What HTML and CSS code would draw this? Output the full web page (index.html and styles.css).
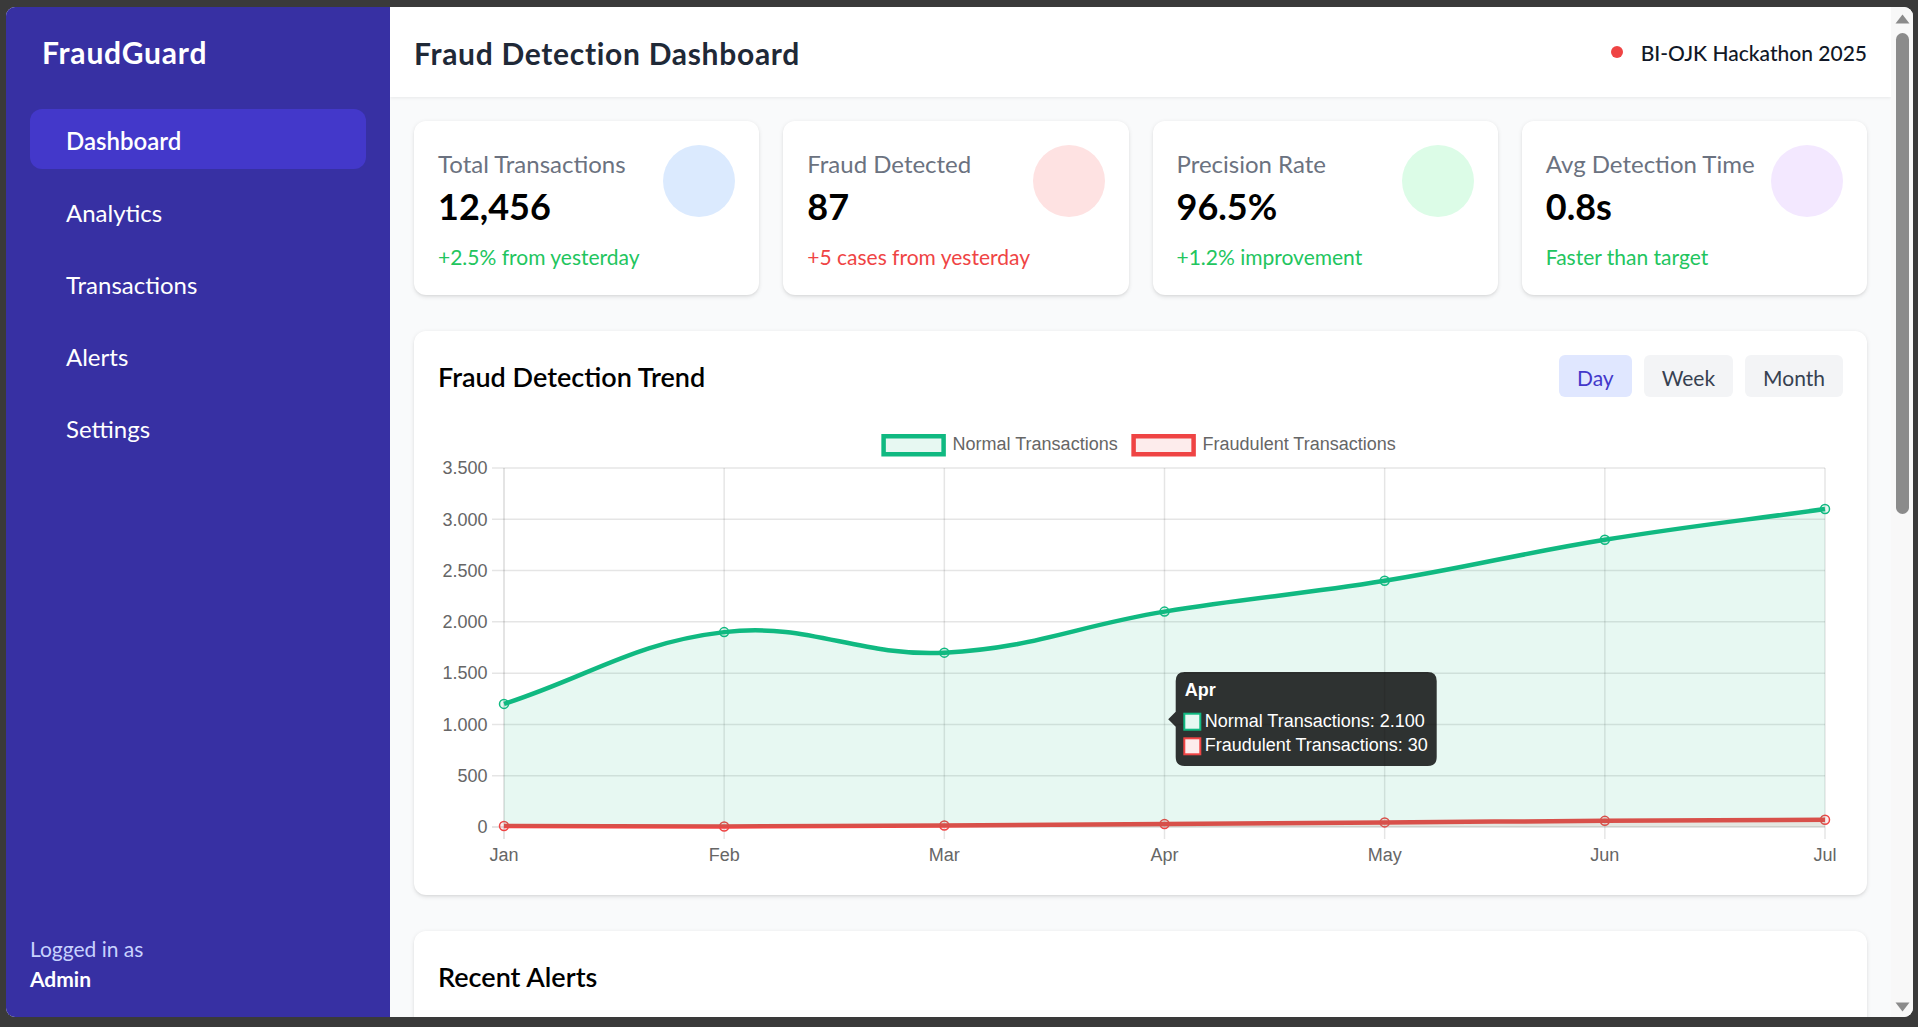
FILE: index.html
```
<!DOCTYPE html>
<html lang="en">
<head>
<meta charset="utf-8">
<title>FraudGuard - Fraud Detection Dashboard</title>
<link rel="stylesheet" href="styles.css">
</head>
<body>
<div class="window">
  <aside class="sidebar">
    <div class="logo">FraudGuard</div>
    <nav class="nav">
      <a class="nav-item active" href="#">Dashboard</a>
      <a class="nav-item" href="#">Analytics</a>
      <a class="nav-item" href="#">Transactions</a>
      <a class="nav-item" href="#">Alerts</a>
      <a class="nav-item" href="#">Settings</a>
    </nav>
    <div class="user">
      <div class="user-label">Logged in as</div>
      <div class="user-name">Admin</div>
    </div>
  </aside>

  <main class="main">
    <header class="topbar">
      <h1 class="page-title">Fraud Detection Dashboard</h1>
      <div class="event"><span class="event-dot"></span><span class="event-name">BI-OJK Hackathon 2025</span></div>
    </header>

    <div class="content">
      <section class="stats">
        <div class="card stat">
          <div class="stat-row">
            <div><div class="stat-label">Total Transactions</div><div class="stat-value">12,456</div></div>
            <div class="stat-icon icon-blue"></div>
          </div>
          <div class="stat-note up">+2.5% from yesterday</div>
        </div>
        <div class="card stat">
          <div class="stat-row">
            <div><div class="stat-label">Fraud Detected</div><div class="stat-value">87</div></div>
            <div class="stat-icon icon-red"></div>
          </div>
          <div class="stat-note down">+5 cases from yesterday</div>
        </div>
        <div class="card stat">
          <div class="stat-row">
            <div><div class="stat-label">Precision Rate</div><div class="stat-value">96.5%</div></div>
            <div class="stat-icon icon-green"></div>
          </div>
          <div class="stat-note up">+1.2% improvement</div>
        </div>
        <div class="card stat">
          <div class="stat-row">
            <div><div class="stat-label">Avg Detection Time</div><div class="stat-value">0.8s</div></div>
            <div class="stat-icon icon-purple"></div>
          </div>
          <div class="stat-note up">Faster than target</div>
        </div>
      </section>

      <section class="card chart-card">
        <div class="chart-head">
          <h2 class="card-title">Fraud Detection Trend</h2>
          <div class="range">
            <button class="range-btn active">Day</button>
            <button class="range-btn">Week</button>
            <button class="range-btn">Month</button>
          </div>
        </div>
        <svg class="chart" viewBox="0 0 1405 450" width="1405" height="450">
          <!-- legend -->
          <rect x="445.6" y="15.25" width="60" height="18" fill="rgba(16,185,129,0.1)" stroke="#10b981" stroke-width="4.5"/>
          <text class="legend-text" x="514.6" y="29">Normal Transactions</text>
          <rect x="695.6" y="15.25" width="60" height="18" fill="rgba(239,68,68,0.1)" stroke="#ef4444" stroke-width="4.5"/>
          <text class="legend-text" x="764.6" y="29">Fraudulent Transactions</text>

          <!-- grid -->
          <g class="grid">
            <line x1="54" y1="354.71" x2="1387" y2="354.71"/>
            <line x1="54" y1="303.43" x2="1387" y2="303.43"/>
            <line x1="54" y1="252.14" x2="1387" y2="252.14"/>
            <line x1="54" y1="200.86" x2="1387" y2="200.86"/>
            <line x1="54" y1="149.57" x2="1387" y2="149.57"/>
            <line x1="54" y1="98.29" x2="1387" y2="98.29"/>
            <line x1="54" y1="47" x2="1387" y2="47"/>
            <line x1="286.17" y1="47" x2="286.17" y2="418"/>
            <line x1="506.33" y1="47" x2="506.33" y2="418"/>
            <line x1="726.5" y1="47" x2="726.5" y2="418"/>
            <line x1="946.67" y1="47" x2="946.67" y2="418"/>
            <line x1="1166.83" y1="47" x2="1166.83" y2="418"/>
            <line x1="1387" y1="47" x2="1387" y2="418"/>
          </g>
          <g class="axis-line">
            <line x1="54" y1="406" x2="1387" y2="406"/>
            <line x1="66" y1="47" x2="66" y2="418"/>
          </g>

          <!-- y labels -->
          <g class="tick-y">
            <text x="49.5" y="412.3">0</text>
            <text x="49.5" y="361">500</text>
            <text x="49.5" y="309.7">1.000</text>
            <text x="49.5" y="258.4">1.500</text>
            <text x="49.5" y="207.2">2.000</text>
            <text x="49.5" y="155.9">2.500</text>
            <text x="49.5" y="104.6">3.000</text>
            <text x="49.5" y="53.3">3.500</text>
          </g>
          <!-- x labels -->
          <g class="tick-x">
            <text x="66" y="440">Jan</text>
            <text x="286.17" y="440">Feb</text>
            <text x="506.33" y="440">Mar</text>
            <text x="726.5" y="440">Apr</text>
            <text x="946.67" y="440">May</text>
            <text x="1166.83" y="440">Jun</text>
            <text x="1387" y="440">Jul</text>
          </g>

          <path class="area-fraud" d="M66,404.97 L286.17,405.49 L506.33,404.46 L726.5,402.92 L946.67,401.38 L1166.83,399.85 L1387,398.82 L1387,406 L66,406 Z"/>
          <path class="line-fraud" d="M66,404.97 C154.07,405.18 196.08,405.6 286.17,405.49 C372.2,405.38 418.8,404.9 506.33,404.46 C594.9,404 638.1,403.5 726.5,402.92 C814.3,402.3 858.9,401.98 946.67,401.38 C1035,400.77 1078.5,400.4 1166.83,399.85 C1254.6,399.3 1298.9,399.2 1387,398.82"/>
          <g class="pts-fraud">
            <circle cx="66" cy="404.97" r="4.5"/>
            <circle cx="286.17" cy="405.49" r="4.5"/>
            <circle cx="506.33" cy="404.46" r="4.5"/>
            <circle cx="726.5" cy="402.92" r="4.5"/>
            <circle cx="946.67" cy="401.38" r="4.5"/>
            <circle cx="1166.83" cy="399.85" r="4.5"/>
            <circle cx="1387" cy="398.82" r="4.5"/>
          </g>

          <!-- normal dataset: area over the fraud line -->
          <path class="area-normal" d="M66,282.91 C154.07,254.19 196.08,221.6 286.17,211.11 C372.21,201.09 418.83,235.71 506.33,231.63 C594.97,227.5 638.12,205.01 726.5,190.6 C814.26,176.29 858.91,174.14 946.67,159.83 C1035.04,145.42 1078.46,133.21 1166.83,118.8 C1254.59,104.49 1298.93,100.34 1387,88.03 L1387,406 L66,406 Z"/>
          <path class="line-normal" d="M66,282.91 C154.07,254.19 196.08,221.6 286.17,211.11 C372.21,201.09 418.83,235.71 506.33,231.63 C594.97,227.5 638.12,205.01 726.5,190.6 C814.26,176.29 858.91,174.14 946.67,159.83 C1035.04,145.42 1078.46,133.21 1166.83,118.8 C1254.59,104.49 1298.93,100.34 1387,88.03"/>
          <g class="pts-normal">
            <circle cx="66" cy="282.91" r="4.5"/>
            <circle cx="286.17" cy="211.11" r="4.5"/>
            <circle cx="506.33" cy="231.63" r="4.5"/>
            <circle cx="726.5" cy="190.6" r="4.5"/>
            <circle cx="946.67" cy="159.83" r="4.5"/>
            <circle cx="1166.83" cy="118.8" r="4.5"/>
            <circle cx="1387" cy="88.03" r="4.5"/>
          </g>

          <!-- tooltip -->
          <g class="tooltip">
            <path class="tip-bg" d="M746.7,251 H989.7 Q998.7,251 998.7,260 V336 Q998.7,345 989.7,345 H746.7 Q737.7,345 737.7,336 V305.8 L730.2,298.3 L737.7,290.8 V260 Q737.7,251 746.7,251 Z"/>
            <text class="tip-title" x="746.7" y="274.7">Apr</text>
            <rect x="746.3" y="292.7" width="16" height="16" fill="#e7f8f2" stroke="#10b981" stroke-width="2"/>
            <text class="tip-body" x="766.7" y="305.7">Normal Transactions: 2.100</text>
            <rect x="746.3" y="317.3" width="16" height="16" fill="#fdecec" stroke="#ef4444" stroke-width="2"/>
            <text class="tip-body" x="766.7" y="329.7">Fraudulent Transactions: 30</text>
          </g>
        </svg>
      </section>

      <section class="card alerts-card">
        <h2 class="card-title">Recent Alerts</h2>
      </section>
    </div>
  </main>

  <div class="scrollbar">
    <svg class="sb-arrow sb-up" viewBox="0 0 15 10" width="15" height="10"><path d="M7.5,0.5 L14.5,9.5 L0.5,9.5 Z"/></svg>
    <div class="sb-thumb"></div>
    <div class="sb-space"></div>
    <svg class="sb-arrow sb-down" viewBox="0 0 15 10" width="15" height="10"><path d="M0.5,0.5 L14.5,0.5 L7.5,9.5 Z"/></svg>
  </div>
</div>
</body>
</html>
```
FILE: styles.css
```
* { box-sizing: border-box; }
html, body { margin: 0; }
body {
  height: 1027px;
  padding: 7px 5px 10px 6px;
  background: #3a3a3a;
  font-family: "Lato", "Noto Sans", sans-serif;
  overflow: hidden;
}
.window {
  display: flex;
  height: 100%;
  border-radius: 9px;
  overflow: hidden;
  background: #f9fafb;
}

/* sidebar */
.sidebar {
  flex: none;
  width: 384px;
  background: #3730a3;
  color: #fff;
  padding: 24px;
  display: flex;
  flex-direction: column;
}
.logo {
  font-size: 30px;
  line-height: 41px;
  padding: 1px 12px 0;
  font-weight: 700;
  letter-spacing: 0.8px;
  margin-bottom: 36px;
}
.nav { display: flex; flex-direction: column; gap: 12px; }
.nav-item {
  display: block;
  padding: 14px 36px 10px;
  font-size: 24px;
  line-height: 36px;
  color: #fff;
  text-decoration: none;
  border-radius: 12px;
}
.nav-item.active { background: #4338ca; font-weight: 600; }
.user { margin-top: auto; font-size: 21px; }
.user-label { color: #c7d2fe; line-height: 28px; padding-top: 2px; }
.user-name { font-weight: 700; line-height: 28px; padding-top: 2px; }

/* main */
.main {
  flex: 1;
  min-width: 0;
  display: flex;
  flex-direction: column;
  overflow: hidden;
  background: #f9fafb;
}
.topbar {
  flex: none;
  display: flex;
  align-items: center;
  justify-content: space-between;
  padding: 24px;
  background: #fff;
  box-shadow: 0 1.5px 3px rgba(0, 0, 0, 0.06);
  position: relative;
  z-index: 1;
}
.page-title {
  margin: 0;
  font-size: 30px;
  line-height: 40px;
  padding-top: 2px;
  font-weight: 700;
  color: #1f2937;
  letter-spacing: 0.7px;
}
.event { display: flex; align-items: center; }
.event-dot {
  width: 12px;
  height: 12px;
  border-radius: 50%;
  background: #ef4444;
  margin-right: 18px;
}
.event-name { font-size: 21px; line-height: 28px; padding-top: 2px; font-weight: 500; color: #111827; }

.content { flex: none; padding: 24px; }
.stats {
  display: grid;
  grid-template-columns: repeat(4, 1fr);
  gap: 24px;
  margin-bottom: 36px;
}
.card {
  background: #fff;
  border-radius: 12px;
  padding: 24px;
  box-shadow: 0 1.5px 4.5px rgba(0, 0, 0, 0.1), 0 1.5px 3px -1.5px rgba(0, 0, 0, 0.1);
}
.stat-row { display: flex; justify-content: space-between; align-items: flex-start; }
.stat-label { font-size: 24px; line-height: 34px; padding-top: 2px; color: #6b7280; }
.stat-value { font-size: 36px; line-height: 46px; padding-top: 2px; font-weight: 700; color: #000; }
.stat-icon { flex: none; width: 72px; height: 72px; border-radius: 50%; }
.icon-blue { background: #dbeafe; }
.icon-red { background: #fee2e2; }
.icon-green { background: #dcfce7; }
.icon-purple { background: #f3e8ff; }
.stat-note { margin-top: 12px; font-size: 21px; line-height: 28px; padding-top: 2px; }
.up { color: #22c55e; }
.down { color: #ef4444; }

.chart-card { margin-bottom: 36px; }
.chart-head {
  display: flex;
  align-items: center;
  justify-content: space-between;
  margin-bottom: 24px;
}
.card-title { margin: 0; font-size: 27px; line-height: 40px; padding-top: 2px; font-weight: 600; color: #000; }
.range { display: flex; gap: 12px; }
.range-btn {
  font-family: inherit;
  font-size: 21px;
  line-height: 30px;
  padding: 8px 18px 4px;
  border: 0;
  border-radius: 6px;
  background: #f3f4f6;
  color: #374151;
}
.range-btn.active { background: #e0e7ff; color: #4338ca; }

/* chart */
.chart { display: block; width: 100%; height: 450px; }
.chart text { font-family: "Liberation Sans", Arial, sans-serif; font-size: 18px; }
.legend-text { fill: #666; }
.grid line { stroke: rgba(0, 0, 0, 0.1); stroke-width: 1.5; }
.axis-line line { stroke: rgba(0, 0, 0, 0.14); stroke-width: 1.5; }
.tick-y text { fill: #666; text-anchor: end; }
.tick-x text { fill: #666; text-anchor: middle; }
.area-normal { fill: rgba(16, 185, 129, 0.1); }
.area-fraud { fill: rgba(239, 68, 68, 0.1); }
.line-normal { fill: none; stroke: #10b981; stroke-width: 4.5; }
.line-fraud { fill: none; stroke: #ef4444; stroke-width: 4.5; }
.pts-normal circle { fill: rgba(16, 185, 129, 0.1); stroke: #10b981; stroke-width: 1.5; }
.pts-fraud circle { fill: rgba(239, 68, 68, 0.1); stroke: #ef4444; stroke-width: 1.5; }
.tip-bg { fill: rgba(0, 0, 0, 0.8); }
.tip-title { fill: #fff; font-weight: 700; }
.tip-body { fill: #fff; }

.alerts-card { min-height: 320px; }

/* scrollbar */
.scrollbar {
  flex: none;
  width: 22px;
  background: #f8f8f8;
  display: flex;
  flex-direction: column;
  align-items: center;
}
.sb-arrow { display: block; flex: none; fill: #8b8b8b; }
.sb-up { margin-top: 7px; }
.sb-down { margin-bottom: 5px; }
.sb-thumb {
  flex: none;
  width: 13px;
  height: 481px;
  margin-top: 9px;
  border-radius: 7px;
  background: #8b8b8b;
}
.sb-space { flex: 1; }
```
